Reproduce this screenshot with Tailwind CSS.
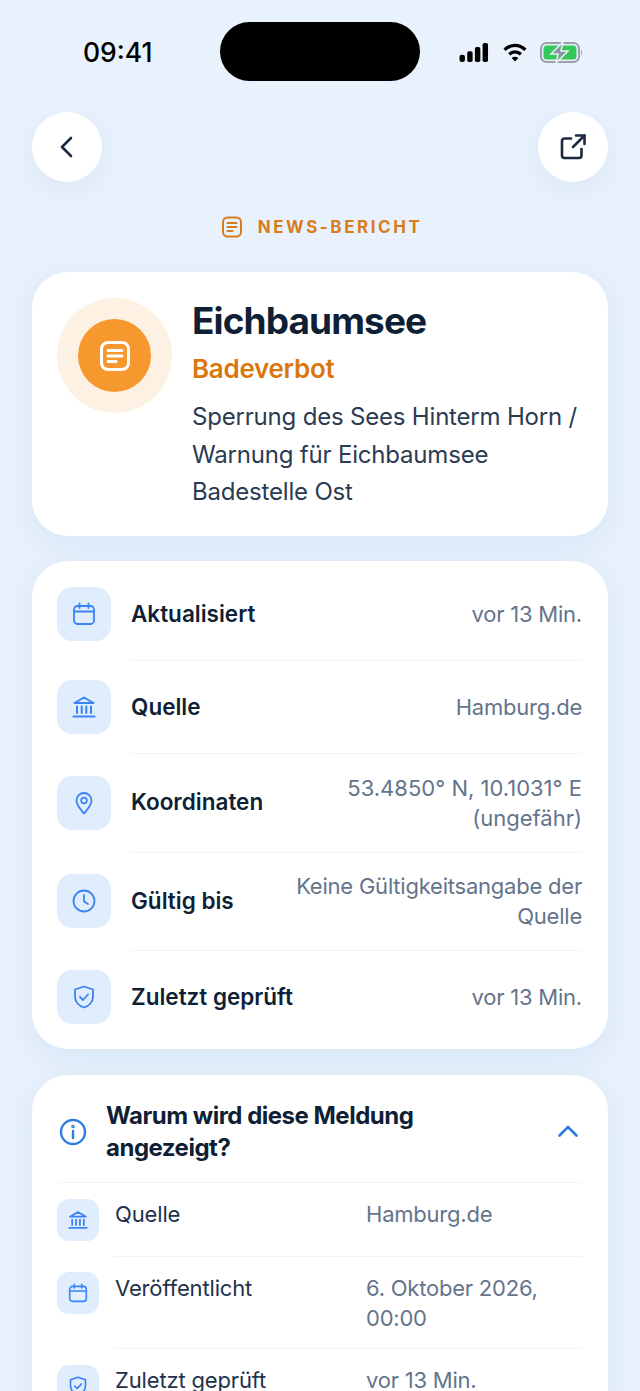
<!DOCTYPE html>
<html lang="de">
<head>
<meta charset="utf-8">
<title>News-Bericht</title>
<script src="https://cdn.jsdelivr.net/npm/@tailwindcss/browser@4"></script>
</head>
<body class="m-0">
<div class="h-[1391px] w-[640px] overflow-hidden bg-[#e8f1fc] font-['Inter','Noto_Sans',sans-serif] text-[#0f1f35]">
	<!-- status bar -->
	<div class="flex h-[81px] items-start justify-between pt-[22px]">
		<div class="w-[220px] pt-[12px] pl-[83px] text-[26.500px] leading-[36px] font-medium text-black">09:41</div>
		<div class="h-[59px] w-[200px] rounded-[30px] bg-black"></div>
		<div class="flex w-[220px] items-center gap-[12px] pt-[20px] pl-[39px]">
			<svg width="30" height="19" viewBox="0 0 32 21" fill="#000"><rect x="0" y="13" width="6" height="8" rx="2.500"/><rect x="8.500" y="9" width="6" height="12" rx="2"/><rect x="17" y="4.500" width="6" height="16.500" rx="2"/><rect x="25.500" y="0" width="6" height="21" rx="2"/></svg>
			<svg width="26" height="19" viewBox="0 0 27 21" fill="none" stroke="#000" stroke-width="3.600" class="ml-[1px]"><path d="M2 7.500C9 1 18 1 25 7.500"/><path d="M7 12.500c4-3.500 9-3.500 13 0"/><path d="M13.500 20.500 9.800 16.500c2-1.700 5.400-1.700 7.400 0z" fill="#000" stroke="none"/></svg>
			<svg width="43" height="21" viewBox="0 0 43 21"><rect x="1" y="1" width="38" height="19" rx="5.500" fill="none" stroke="#9aa0a6" stroke-width="2"/><rect x="3.500" y="3.500" width="33" height="14" rx="3.500" fill="#34c759"/><path d="M41 7.500c1.300.5 1.300 5.500 0 6z" fill="#9aa0a6"/><path d="M23 0 11 12h7l-2 9 12-12h-7z" fill="#8f949b" stroke="#e8f1fc" stroke-width="1.500"/></svg>
		</div>
	</div>

	<!-- nav buttons -->
	<div class="mt-[31px] flex justify-between px-[32px]">
		<button class="flex h-[70px] w-[70px] items-center justify-center rounded-full bg-white shadow-[0_8px_24px_rgba(120,160,210,0.10)]">
			<svg width="28" height="28" viewBox="0 0 28 28" fill="none" stroke="#1b2a41" stroke-width="2.600" stroke-linecap="round" stroke-linejoin="round" class="-ml-[1px] -mt-[1px]"><path d="M18 5 9 14l9 9"/></svg>
		</button>
		<button class="flex h-[70px] w-[70px] items-center justify-center rounded-full bg-white shadow-[0_8px_24px_rgba(120,160,210,0.10)]">
			<svg width="28" height="28" viewBox="0 0 28 28" fill="none" stroke="#1b2a41" stroke-width="2.600" stroke-linecap="round" stroke-linejoin="round"><path d="M12 5.500H5.500a2.500 2.500 0 0 0-2.500 2.500v14.500a2.500 2.500 0 0 0 2.500 2.500H20a2.500 2.500 0 0 0 2.500-2.500V16"/><path d="M14 14 25.500 2.500"/><path d="M17 2.500h8.500V11"/></svg>
		</button>
	</div>

	<!-- eyebrow -->
	<div class="mt-[33px] flex h-[24px] items-center justify-center gap-[16px] pl-[4px]">
		<svg width="20" height="22" viewBox="0 0 20 22" fill="none" stroke="#d97d1c" stroke-width="2" stroke-linecap="round"><rect x="1" y="1.500" width="18" height="19" rx="4.500"/><path d="M5.500 7h9M5.500 11h9M5.500 15h5"/></svg>
		<span class="text-[17px] leading-[24px] font-bold tracking-[2.550px] text-[#d97d1c]">NEWS-BERICHT</span>
	</div>

	<!-- hero card -->
	<div class="mx-[32px] mt-[33px] flex h-[264px] gap-[20px] rounded-[36px] bg-white pt-[26px] pl-[25px] shadow-[0_8px_28px_rgba(120,160,210,0.14)]">
		<div class="flex h-[115px] w-[115px] shrink-0 items-center justify-center rounded-full bg-[#fdf1e4]">
			<div class="flex h-[73px] w-[73px] items-center justify-center rounded-full bg-[#f7982e]">
				<svg width="30" height="30" viewBox="0 0 30 30" fill="none" stroke="#fff" stroke-width="3" stroke-linecap="round"><rect x="1.500" y="1.500" width="27" height="27" rx="6.500"/><path d="M8 9.500h14M8 15h14M8 20.500h8"/></svg>
			</div>
		</div>
		<div class="min-w-0 flex-1">
			<div class="-mt-[1px] text-[37px] leading-[48px] font-bold tracking-[-0.900px] text-[#0f1f35]">Eichbaumsee</div>
			<div class="mt-[1px] text-[26px] leading-[46px] font-semibold tracking-[-0.300px] text-[#d9770f]">Badeverbot</div>
			<div class="mt-[6px] w-[395px] text-[24px] leading-[37.500px] tracking-[-0.190px] text-[#2b3b52]">Sperrung des Sees Hinterm Horn / Warnung für Eichbaumsee Badestelle Ost</div>
		</div>
	</div>

	<!-- facts card -->
	<div class="mx-[32px] mt-[25px] rounded-[36px] bg-white pt-[7px] pr-[26px] pb-[6px] pl-[25px] shadow-[0_8px_28px_rgba(120,160,210,0.14)]">
		<div class="flex items-center">
			<div class="mb-[2px] flex h-[54px] w-[54px] shrink-0 items-center justify-center rounded-[15px] bg-[#dfedfc]">
				<svg width="24" height="24" viewBox="0 0 24 24" fill="none" stroke="#3b82f6" stroke-width="1.800" stroke-linecap="round" stroke-linejoin="round"><rect x="2" y="4" width="20" height="18" rx="3.500"/><path d="M2 9.500h20M7.500 1.500v4.500M16.500 1.500v4.500"/></svg>
			</div>
			<div class="ml-[20px] flex h-[93px] flex-1 items-center justify-between border-b border-[#f1f4f8]">
				<div class="text-[22.500px] leading-[30px] font-semibold text-[#0f1f35]">Aktualisiert</div>
				<div class="text-right text-[22px] leading-[30px] tracking-[-0.220px] text-[#64748b]">vor 13 Min.</div>
			</div>
		</div>
		<div class="flex items-center">
			<div class="mb-[2px] flex h-[54px] w-[54px] shrink-0 items-center justify-center rounded-[15px] bg-[#dfedfc]">
				<svg width="24" height="24" viewBox="0 0 24 24" fill="none" stroke="#3b82f6" stroke-width="2" stroke-linecap="round" stroke-linejoin="round"><path d="M2.500 8 12 2.500 21.500 8z"/><path d="M5 11.500V18M9.700 11.500V18M14.300 11.500V18M19 11.500V18M1.500 21.500h21"/></svg>
			</div>
			<div class="ml-[20px] flex h-[93px] flex-1 items-center justify-between border-b border-[#f1f4f8]">
				<div class="text-[22.500px] leading-[30px] font-semibold text-[#0f1f35]">Quelle</div>
				<div class="text-right text-[22px] leading-[30px] tracking-[-0.220px] text-[#64748b]">Hamburg.de</div>
			</div>
		</div>
		<div class="flex items-center">
			<div class="mb-[2px] flex h-[54px] w-[54px] shrink-0 items-center justify-center rounded-[15px] bg-[#dfedfc]">
				<svg width="24" height="24" viewBox="0 0 24 24" fill="none" stroke="#3b82f6" stroke-width="1.800" stroke-linecap="round" stroke-linejoin="round"><path d="M12 22.500c-1-1.500-7.500-7.500-7.500-13a7.500 7.500 0 0 1 15 0c0 5.500-6.500 11.500-7.500 13z"/><circle cx="12" cy="9.500" r="2.800"/></svg>
			</div>
			<div class="ml-[20px] flex h-[99px] flex-1 items-center justify-between border-b border-[#f1f4f8]">
				<div class="mb-[2px] text-[22.500px] leading-[30px] font-semibold text-[#0f1f35]">Koordinaten</div>
				<div class="w-[270px] text-right text-[22px] leading-[30px] text-[#64748b]">53.4850° N, 10.1031° E (ungefähr)</div>
			</div>
		</div>
		<div class="flex items-center">
			<div class="mb-[2px] flex h-[54px] w-[54px] shrink-0 items-center justify-center rounded-[15px] bg-[#dfedfc]">
				<svg width="24" height="24" viewBox="0 0 24 24" fill="none" stroke="#3b82f6" stroke-width="1.800" stroke-linecap="round" stroke-linejoin="round"><circle cx="12" cy="12" r="10.500"/><path d="M12 6v6.500l4 2.500"/></svg>
			</div>
			<div class="ml-[20px] flex h-[98px] flex-1 items-center justify-between border-b border-[#f1f4f8] pb-[2px]">
				<div class="text-[22.500px] leading-[30px] font-semibold text-[#0f1f35]">Gültig bis</div>
				<div class="w-[300px] text-right text-[22px] leading-[30px] tracking-[-0.220px] text-[#64748b]">Keine Gültigkeitsangabe der Quelle</div>
			</div>
		</div>
		<div class="flex items-center">
			<div class="flex h-[54px] w-[54px] shrink-0 items-center justify-center rounded-[15px] bg-[#dfedfc]">
				<svg width="24" height="24" viewBox="0 0 24 24" fill="none" stroke="#3b82f6" stroke-width="1.800" stroke-linecap="round" stroke-linejoin="round"><path d="M12 1.500 3 4.500v7c0 5.500 4 9.500 9 11 5-1.500 9-5.500 9-11v-7z"/><path d="m8 12 3 3 5-5.500"/></svg>
			</div>
			<div class="ml-[20px] flex h-[92px] flex-1 items-center justify-between">
				<div class="text-[22.500px] leading-[30px] font-semibold text-[#0f1f35]">Zuletzt geprüft</div>
				<div class="text-right text-[22px] leading-[30px] tracking-[-0.220px] text-[#64748b]">vor 13 Min.</div>
			</div>
		</div>
	</div>

	<!-- why card -->
	<div class="mx-[32px] mt-[26px] rounded-t-[36px] bg-white pr-[26px] pl-[25px] shadow-[0_8px_28px_rgba(120,160,210,0.14)]">
		<div class="flex items-center border-b border-[#f1f4f8] pt-[25px] pb-[18px]">
			<svg width="28" height="28" viewBox="0 0 28 28" fill="none" stroke="#2f7de1" stroke-width="2.400" stroke-linecap="round" class="ml-[2px] shrink-0"><circle cx="14" cy="14" r="12"/><path d="M14 13v7"/><circle cx="14" cy="8.500" r="0.600" fill="#2f7de1"/></svg>
			<div class="ml-[19px] w-[340px] text-[24px] leading-[32px] font-bold tracking-[-0.500px] text-[#0f1f35]">Warum wird diese Meldung angezeigt?</div>
			<svg width="20" height="12" viewBox="0 0 20 12" fill="none" stroke="#2f7de1" stroke-width="2.600" stroke-linecap="round" stroke-linejoin="round" class="ml-auto mr-[4px] -mt-[3px]"><path d="M1.500 10.500 10 2l8.500 8.500"/></svg>
		</div>
		<div class="flex pt-[16px]">
			<div class="flex h-[42px] w-[42px] shrink-0 items-center justify-center rounded-[12px] bg-[#dfedfc]">
				<svg width="20" height="20" viewBox="0 0 24 24" fill="none" stroke="#3b82f6" stroke-width="2.100" stroke-linecap="round" stroke-linejoin="round"><path d="M2.500 8 12 2.500 21.500 8z"/><path d="M5 11.500V18M9.700 11.500V18M14.300 11.500V18M19 11.500V18M1.500 21.500h21"/></svg>
			</div>
			<div class="ml-[16px] flex flex-1 border-b border-[#f1f4f8] pb-[27px] text-[22px] leading-[30px] tracking-[-0.150px]">
				<div class="w-[251px] text-[#22324a]">Quelle</div>
				<div class="flex-1 tracking-[-0.220px] text-[#64748b]">Hamburg.de</div>
			</div>
		</div>
		<div class="flex pt-[16px]">
			<div class="-mt-[1px] flex h-[42px] w-[42px] shrink-0 items-center justify-center rounded-[12px] bg-[#dfedfc]">
				<svg width="20" height="20" viewBox="0 0 24 24" fill="none" stroke="#3b82f6" stroke-width="1.900" stroke-linecap="round" stroke-linejoin="round"><rect x="2" y="4" width="20" height="18" rx="3.500"/><path d="M2 9.500h20M7.500 1.500v4.500M16.500 1.500v4.500"/></svg>
			</div>
			<div class="ml-[16px] flex flex-1 border-b border-[#f1f4f8] pb-[15px] text-[22px] leading-[30px] tracking-[-0.150px]">
				<div class="w-[251px] text-[#22324a]">Veröffentlicht</div>
				<div class="flex-1 tracking-[-0.220px] text-[#64748b]">6. Oktober 2026, 00:00</div>
			</div>
		</div>
		<div class="flex pt-[16px]">
			<div class="flex h-[42px] w-[42px] shrink-0 items-center justify-center rounded-[12px] bg-[#dfedfc]">
				<svg width="20" height="20" viewBox="0 0 24 24" fill="none" stroke="#3b82f6" stroke-width="1.900" stroke-linecap="round" stroke-linejoin="round"><path d="M12 1.500 3 4.500v7c0 5.500 4 9.500 9 11 5-1.500 9-5.500 9-11v-7z"/><path d="m8 12 3 3 5-5.500"/></svg>
			</div>
			<div class="ml-[16px] flex flex-1 text-[22px] leading-[30px] tracking-[-0.150px]">
				<div class="w-[251px] text-[#22324a]">Zuletzt geprüft</div>
				<div class="flex-1 tracking-[-0.220px] text-[#64748b]">vor 13 Min.</div>
			</div>
		</div>
	</div>
</div>
</body>
</html>
